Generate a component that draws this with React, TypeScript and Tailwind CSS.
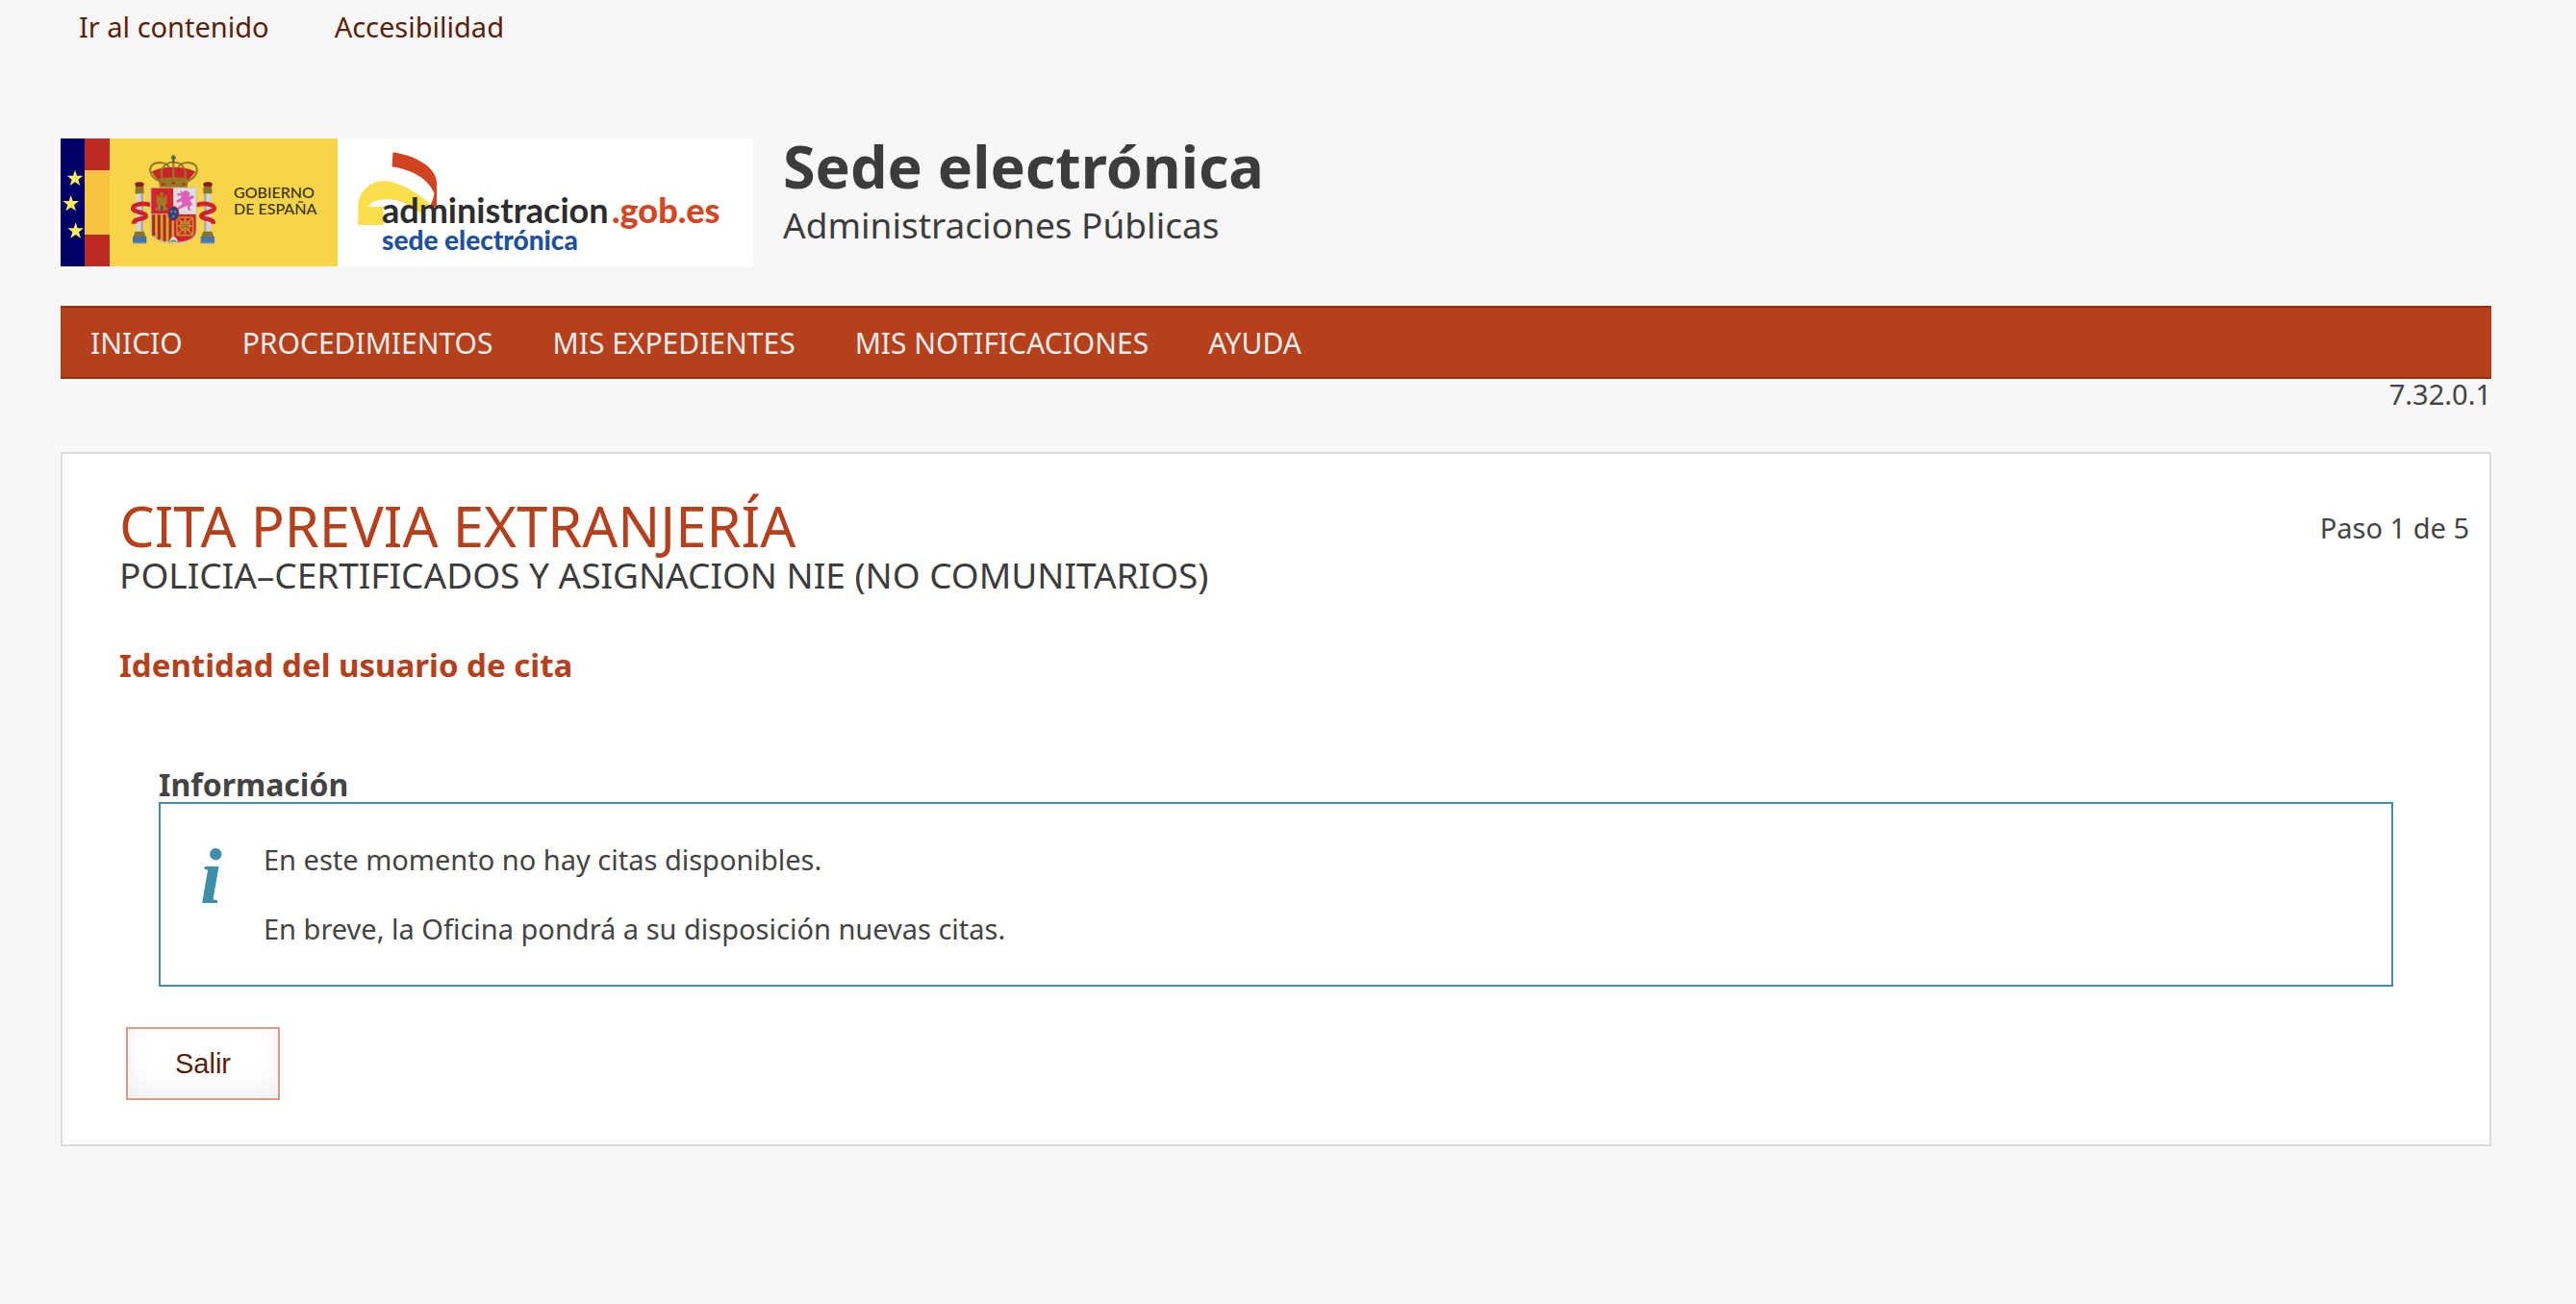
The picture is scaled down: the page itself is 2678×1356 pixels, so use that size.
const topLinks = ["Ir al contenido", "Accesibilidad"];

const menuItems = [
  "INICIO",
  "PROCEDIMIENTOS",
  "MIS EXPEDIENTES",
  "MIS NOTIFICACIONES",
  "AYUDA",
];

const messages = [
  "En este momento no hay citas disponibles.",
  "En breve, la Oficina pondrá a su disposición nuevas citas.",
];

interface IStarProps {
  x: number;
  y: number;
}

const Star = ({ x, y }: IStarProps) => (
  <path
    transform={`translate(${x} ${y})`}
    fill="#fbee58"
    d="M0-26 6-8H25L10 4 16 23 0 12-16 23-10 4-25-8H-6Z"
  />
);

const Column = () => (
  <>
    <path fill="#8a1a1c" d="M270 182q15-8 30 0l-4 12h-22Z" />
    <rect x="272" y="192" width="27" height="24" rx="5" fill="#8d7424" />
    <rect x="275" y="214" width="20" height="120" fill="#d3d3da" />
    <rect x="290" y="214" width="6" height="120" fill="#a3a3ae" />
    <path fill="#8d7424" d="M272 332h27l6 16h-39Z" />
    <path fill="#3f74b5" d="M264 348h43v20h-43Z" />
    <path fill="#7d8aa0" d="M264 365h43v5h-43Z" />
    <path
      fill="none"
      stroke="#cf2229"
      strokeWidth="14"
      d="M322 250c-24-9-56-3-57 10s40 12 40 24-38 5-38 24"
    />
  </>
);

const CoatOfArms = () => (
  <>
    <Column />
    <g transform="translate(783 0) scale(-1 1)">
      <Column />
    </g>
    {/* escudo */}
    <path fill="#c9c4b0" d="M318 194h146v136c0 26-32 41-73 41s-73-15-73-41Z" />
    <path fill="#d2232a" d="M322 197h68v80h-68Z" />
    <path fill="#dedbe2" d="M392 197h69v80h-69Z" />
    <path fill="#dba42c" d="M322 279h68v86c-41 0-68-12-68-36Z" />
    <path fill="#d2232a" d="M392 279h69v50c0 24-28 36-69 36Z" />
    <path
      stroke="#a82a20"
      strokeWidth="9"
      d="M329 280v66M346 280v77M363 280v82M381 280v84"
    />
    {/* castillo */}
    <path
      fill="#a07920"
      d="M338 220h8v7h4v-17h9v17h4v-7h8v24h-4v14h5v8h-36v-8h5v-14h-3Z"
    />
    <path fill="#3d4a70" d="M351 252h7v13h-7z" />
    {/* leon */}
    <path
      fill="#df5fb7"
      d="M411 205l10 4 10-5 12 8-5 12 12-5 6 7-14 9 8 12-9 9 5 12-10-4-2-13-14 6-14 8-3-6 16-12-3-9-14 4-2-7 14-6 2-10-12 2-1-8 12-1Z"
    />
    {/* cadenas */}
    <g fill="none" stroke="#c39026" strokeWidth="5">
      <rect x="402" y="288" width="50" height="56" rx="6" />
      <circle cx="427" cy="315" r="15" />
      <path d="M427 286v60M400 315h54M404 290l46 52M450 290l-46 52" />
    </g>
    <circle cx="427" cy="315" r="5" fill="#4f8c3a" />
    <ellipse cx="391" cy="276" rx="18" ry="23" fill="#c5262c" />
    <ellipse cx="391" cy="276" rx="15" ry="20" fill="#1e3f94" />
    <path
      fill="#9b9540"
      d="M382 266h6v8h-6zM394 266h6v8h-6zM388 281h6v8h-6z"
    />
    <path fill="#dedbd4" d="M378 362q13-28 27 0-13 8-27 0Z" />
    <path fill="#54934d" d="M383 359h16v5h-16z" />
    {/* corona */}
    <path fill="#cc2229" d="M322 146q28-16 69-14 41-2 69 14l-24 28h-90Z" />
    <g fill="none" stroke="#8f7a24" strokeWidth="6">
      <path d="M348 176c-42-22-36-56-2-59 18 0 28 7 31 16M435 176c42-22 36-56 2-59-18 0-28 7-31 16" />
      <path d="M359 176c-14-32 0-60 32-60s46 28 32 60" />
      <path d="M391 116v58" />
    </g>
    <path fill="#957a20" d="M344 169q47-12 94 0l-4 25h-86Z" />
    <path
      fill="#c42a28"
      d="M354 180h10v8h-10zM386 177h10v8h-10zM418 180h10v8h-10z"
    />
    <path stroke="#4b6155" strokeWidth="7" d="M391 94v24M384 102h14" />
  </>
);

const Logo = () => (
  <svg
    viewBox="0 0 720 133"
    role="img"
    aria-label="Gobierno de España - administracion.gob.es"
    className="h-[133px] w-[720px] shrink-0"
  >
    <rect width="720" height="133" fill="#fff" />
    <rect width="25" height="133" fill="#00006b" />
    <rect x="25" width="27" height="133" fill="#bb2b22" />
    <rect x="25" y="33" width="27" height="67" fill="#f5c242" />
    <rect x="51" width="237" height="133" fill="#f8d548" />
    <g transform="translate(-13 -14) scale(0.33333)">
      <Star x={84} y={166} />
      <Star x={71} y={245} />
      <Star x={86} y={330} />
      <CoatOfArms />
    </g>
    <g fill="#39300f" className="font-['Lato',sans-serif] text-[16px] font-medium">
      <text x="180" y="62">GOBIERNO</text>
      <text x="180" y="79">DE ESPAÑA</text>
    </g>
    <path
      fill="#fadf4b"
      d="M309.3 90V70C310 55 322 44 337 44c15 1 33 12 46.500 23.500L374 78c-9-8-22-15.500-35.500-14.700-8.500.2-16.500 2.700-19.200 7.700h16.200v19Z"
    />
    <path
      fill="#d14321"
      d="M345.500 14.300C375 19 391 33 391 46v25h-7.500c2.500-5 4.500-9 5-14-5.500-14-22.500-25-44-27.500Z"
    />
    <g className="font-['Lato',sans-serif] text-[36px] font-bold">
      <text x="334" y="88" fill="#2d2d2d">administracion</text>
      <text x="573" y="88" fill="#d34722" className="font-black">.gob.es</text>
    </g>
    <text
      x="334"
      y="116"
      fill="#1d509f"
      className="font-['Lato',sans-serif] text-[28px] font-black"
    >
      sede electrónica
    </text>
  </svg>
);

const App = () => {
  return (
    <div className="min-h-screen bg-[#f7f7f7] pr-[88px] pb-24 pl-[63px] font-['Noto_Sans',sans-serif] text-[29px] text-[#444]">
      <nav className="flex gap-[68px] pt-2 pl-[19px] leading-10 text-[#5a1f0a]">
        {topLinks.map((item) => (
          <a key={item} href="#">{item}</a>
        ))}
      </nav>

      <header className="mt-24 flex items-start gap-[31px] text-[#3c3c3c]">
        <Logo />
        <div>
          <p className="text-[61px] leading-[58px] font-bold">Sede electrónica</p>
          <p className="mt-[10px] text-[37px] leading-11">Administraciones Públicas</p>
        </div>
      </header>

      <nav className="mt-[41px] flex h-[76px] items-center gap-[62px] border-y-2 border-[#922f14] bg-[#b5401b] px-[31px] text-[30px] text-[#ededed]">
        {menuItems.map((item) => (
          <a key={item} href="#">{item}</a>
        ))}
      </nav>
      <p className="text-right leading-8">7.32.0.1</p>

      <main className="mt-11 border-2 border-[#dadada] bg-white pt-[44px] pr-[21px] pb-[46px] pl-[59px]">
        <div className="flex items-center justify-between">
          <h1 className="text-[58px] leading-[62px] text-[#b5401b]">CITA PREVIA EXTRANJERÍA</h1>
          <p className="pt-1">Paso 1 de 5</p>
        </div>
        <p className="text-[37px] leading-10 text-[#3c3c3c]">
          POLICIA–CERTIFICADOS Y ASIGNACION NIE (NO COMUNITARIOS)
        </p>
        <h2 className="mt-[54px] text-[33px] leading-10 font-bold text-[#b5401b]">
          Identidad del usuario de cita
        </h2>

        <section className="mt-[86px] mr-[79px] ml-[41px]">
          <h3 className="text-[32px] leading-9 font-bold">Información</h3>
          <div className="flex border-2 border-[#3f8fa8] py-10 pl-[41px]">
            <span
              aria-hidden="true"
              className="w-[66px] font-['Liberation_Serif',serif] text-[82px] leading-[72px] font-bold text-[#3f8fa8] italic"
            >
              i
            </span>
            <div className="flex flex-col gap-9 leading-9">
              {messages.map((item) => (
                <p key={item}>{item}</p>
              ))}
            </div>
          </div>
        </section>

        <button
          type="button"
          className="mt-[42px] ml-[7px] block h-[76px] w-40 border-2 border-[#d89c84] bg-white pt-0.5 font-['Liberation_Sans',sans-serif] text-[29px] text-[#5a1f0a] shadow-[inset_0_-10px_24px_#f0f0f0]"
        >
          Salir
        </button>
      </main>
    </div>
  );
};

export default App;
